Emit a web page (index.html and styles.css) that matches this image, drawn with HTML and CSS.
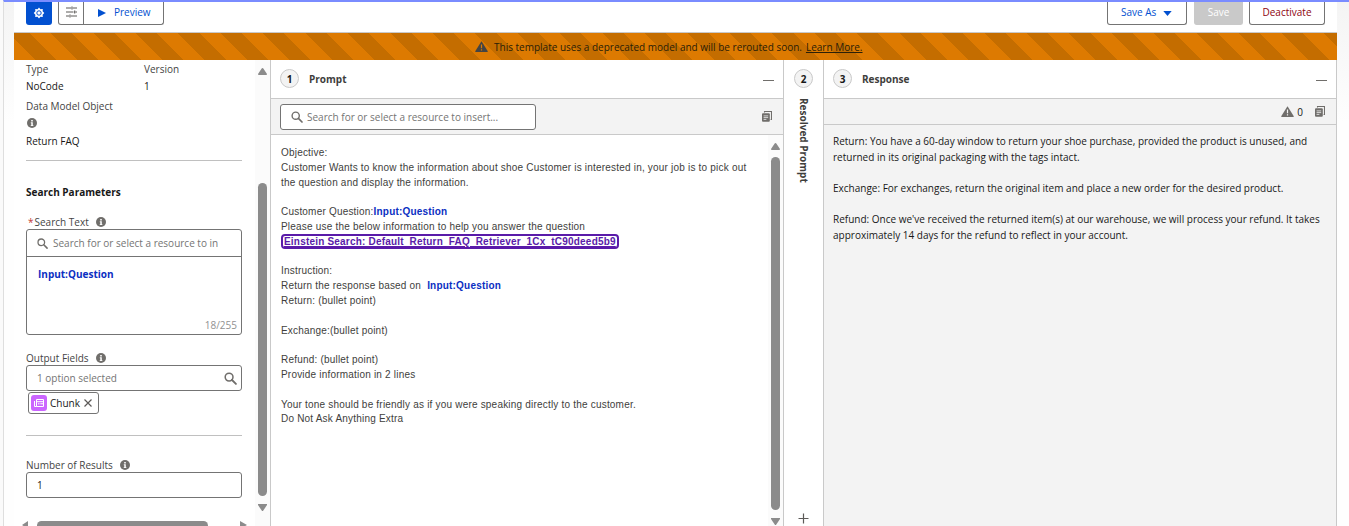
FILE: index.html
```
<!DOCTYPE html>
<html lang="en">
<head>
<meta charset="utf-8">
<title>Prompt Builder</title>
<link rel="stylesheet" href="styles.css">
</head>
<body>
<svg width="0" height="0" class="defs">
  <symbol id="info" viewBox="0 0 10 10"><circle cx="5" cy="5" r="5" fill="#706e6b"/><path d="M4.2 2h1.6v1.5H4.2zM3.8 4.3h2v2.9h.6v.9H3.7v-.9h.6V5.2h-.5z" fill="#fff"/></symbol>
  <symbol id="search" viewBox="0 0 12 12"><circle cx="4.7" cy="4.7" r="3.6" fill="none" stroke="#706e6b" stroke-width="1.4"/><path d="M7.4 7.4l3.6 3.6" stroke="#706e6b" stroke-width="1.7" stroke-linecap="round"/></symbol>
  <symbol id="copy" viewBox="0 0 10 11"><path d="M2.5 1.6V.5h7v8H8.6" fill="none" stroke="#706e6b" stroke-width="1.1"/><rect x="0" y="2.2" width="7.8" height="8.6" rx="1" fill="#706e6b"/><path d="M1.6 4.9h4.6M1.6 6.6h4.6M1.6 8.4h2.8" stroke="#f3f3f3" stroke-width=".8"/></symbol>
  <symbol id="warn" viewBox="0 0 13 11"><path d="M6.5 0.2L12.8 10.2q.2.8-.7.8H.9q-.9 0-.7-.8z" fill="currentColor"/><path d="M6.5 3.6v3.6M6.5 8.3v1.3" stroke="var(--mark)" stroke-width="1.2"/></symbol>
</svg>
<div class="window">
  <div class="app">
    <header class="toolbar">
      <div class="gear"><svg width="12" height="12" viewBox="0 0 12 12"><path d="M6 .6l1.4 1.7 2.4-.3-.2 2.3L11.3 6 9.6 7.7l.2 2.3-2.4-.3L6 11.4 4.6 9.7l-2.4.3.2-2.3L.7 6l1.7-1.7L2.2 2l2.4.3z" fill="#fff"/><circle cx="6" cy="6" r="2.2" fill="none" stroke="#0250d0" stroke-width="1"/></svg></div>
      <div class="group">
        <div class="sliders"><svg width="11" height="12" viewBox="0 0 11 12"><path d="M0 2h5M7 2h4M0 6h7.5M9.5 6H11M0 10h3M5 10h6M6 .5v3M8.7 4.5v3M4 8.5v3" stroke="#5c5a58" stroke-width="1.1"/></svg></div>
        <div class="preview"><svg width="8" height="8" viewBox="0 0 8 8"><path d="M0 0l8 4-8 4z" fill="#0250d0"/></svg><span>Preview</span></div>
      </div>
      <div class="spacer"></div>
      <div class="btn saveas"><span>Save As</span><svg width="9" height="5" viewBox="0 0 9 5"><path d="M.3 0h8.4L4.5 5z" fill="#0250d0"/></svg></div>
      <div class="btn save">Save</div>
      <div class="btn deact">Deactivate</div>
    </header>
    <div class="banner"><svg width="13" height="11"><use href="#warn"/></svg><span class="msg">This template uses a deprecated model and will be rerouted soon.</span><span class="more">Learn More.</span></div>
    <main class="panels">
      <aside class="side">
        <div class="form">
          <div class="pair">
            <div><p class="label">Type</p><p class="value">NoCode</p></div>
            <div><p class="label">Version</p><p class="value">1</p></div>
          </div>
          <p class="label dmo">Data Model Object</p>
          <svg class="dmo-info" width="10" height="10"><use href="#info"/></svg>
          <p class="value faq">Return FAQ</p>
          <hr class="rule">
          <h2 class="heading">Search Parameters</h2>
          <div class="field-label text-label"><span><b class="req">*</b>Search Text</span><svg width="10" height="10"><use href="#info"/></svg></div>
          <div class="editor">
            <div class="editor-search"><svg width="11" height="11"><use href="#search"/></svg><span>Search for or select a resource to in</span></div>
            <div class="editor-body"><b class="token">Input:Question</b><span class="count">18/255</span></div>
          </div>
          <div class="field-label out-label"><span>Output Fields</span><svg width="10" height="10"><use href="#info"/></svg></div>
          <div class="select"><span>1 option selected</span><svg width="13" height="13"><use href="#search"/></svg></div>
          <div class="pill"><i class="pill-icon"><svg width="10" height="8" viewBox="0 0 10 8"><path d="M2.5.5h7v7h-7zM2.5 2.7h7M4 4.8h1.5M6.3 4.8H9M.5 2v5.5h2" fill="none" stroke="#fff"/></svg></i><span>Chunk</span><svg width="8" height="8" viewBox="0 0 8 8"><path d="M.5.5l7 7M7.500.5l-7 7" stroke="#5c5a58" stroke-width="1.2"/></svg></div>
          <hr class="rule second">
          <div class="field-label num-label"><span>Number of Results</span><svg width="10" height="10"><use href="#info"/></svg></div>
          <div class="number">1</div>
          <div class="hscroll"><svg width="6" height="8" viewBox="0 0 6 8"><path d="M6 0v8L0 4z" fill="#8b8b8b"/></svg><i></i><svg width="7" height="8" viewBox="0 0 7 8"><path d="M0 0v8l7-4z" fill="#8b8b8b"/></svg></div>
        </div>
        <div class="vscroll"><svg width="9" height="7" viewBox="0 0 9 7"><path d="M4.500 0q.6 0 1 .7L9 6q0 1-.8 1H.8Q0 7 0 6L3.500.7q.4-.7 1-.7z" fill="#8b8b8b"/></svg><i></i><svg width="9" height="7" viewBox="0 0 9 7"><path d="M0 0h9v1L5.300 6.500q-.8 1-1.600 0L0 1z" fill="#8b8b8b"/></svg></div>
      </aside>
      <section class="prompt">
        <div class="panel-head"><span class="num">1</span><h3>Prompt</h3><i class="minus"></i></div>
        <div class="panel-tools"><div class="finder"><svg width="12" height="12"><use href="#search"/></svg><span>Search for or select a resource to insert...</span></div><svg class="copy" width="10" height="11"><use href="#copy"/></svg></div>
        <div class="prompt-main">
          <div class="prompt-text">
            <p>Objective:</p>
            <p>Customer Wants to know the information about shoe Customer is interested in, your job is to pick out<br>the question and display the information.</p>
            <br>
            <p>Customer Question:<b class="token">Input:Question</b></p>
            <p>Please use the below information to help you answer the question</p>
            <p><b class="chip">Einstein Search: Default_Return_FAQ_Retriever_1Cx_tC90deed5b9</b></p>
            <br>
            <p>Instruction:</p>
            <p>Return the response based on <b class="token gap">Input:Question</b></p>
            <p>Return: (bullet point)</p>
            <br>
            <p>Exchange:(bullet point)</p>
            <br>
            <p>Refund: (bullet point)</p>
            <p>Provide information in 2 lines</p>
            <br>
            <p>Your tone should be friendly as if you were speaking directly to the customer.</p>
            <p>Do Not Ask Anything Extra</p>
          </div>
          <div class="vscroll inner"><svg width="9" height="7" viewBox="0 0 9 7"><path d="M4.500 0q.6 0 1 .7L9 6q0 1-.8 1H.8Q0 7 0 6L3.500.7q.4-.7 1-.7z" fill="#8b8b8b"/></svg><i></i><svg width="9" height="7" viewBox="0 0 9 7"><path d="M0 0h9v1L5.300 6.500q-.8 1-1.600 0L0 1z" fill="#8b8b8b"/></svg></div>
        </div>
      </section>
      <section class="resolved"><span class="num">2</span><h3>Resolved Prompt</h3><svg class="plus" width="11" height="11" viewBox="0 0 11 11"><path d="M5.500 0.500v10M.5 5.500h10" stroke="#5c5a58" stroke-width="1.2"/></svg></section>
      <section class="response">
        <div class="panel-head"><span class="num">3</span><h3>Response</h3><i class="minus"></i></div>
        <div class="resp-tools"><svg class="w" width="13" height="11"><use href="#warn"/></svg><span>0</span><svg width="10" height="11"><use href="#copy"/></svg></div>
        <div class="resp-text">
          <p>Return: You have a 60-day window to return your shoe purchase, provided the product is unused, and<br>returned in its original packaging with the tags intact.</p>
          <br>
          <p>Exchange: For exchanges, return the original item and place a new order for the desired product.</p>
          <br>
          <p>Refund: Once we've received the returned item(s) at our warehouse, we will process your refund. It takes<br>approximately 14 days for the refund to reflect in your account.</p>
        </div>
      </section>
    </main>
  </div>
</div>
</body>
</html>
```
FILE: styles.css
```
* { box-sizing: border-box; }
body { margin: 0; height: 526px; overflow: hidden; background: #fafafa; font: 10px/14px "Open Sans", "Noto Sans", sans-serif; color: #181818; }
p, h2, h3 { margin: 0; }
svg { display: block; flex: none; }
.defs { position: absolute; }
.window { margin-left: 3px; height: 526px; border-left: 1px solid #dedede; border-top: 2px solid #7a8cff; padding: 0 12px 0 10px; background: linear-gradient(#f4f4f4, #fefefe 120px); }
.app { height: 524px; display: flex; flex-direction: column; background: #fff; }
.toolbar { height: 31px; flex: none; display: flex; align-items: flex-start; padding: 0 12px; border-bottom: 1px solid #c9c9c9; color: #0250d0; }
.gear { width: 26px; height: 23px; background: #0250d0; border-radius: 0 0 3px 3px; display: flex; justify-content: center; padding-top: 5px; }
.group { margin-left: 6px; width: 106px; height: 23px; display: flex; border: 1px solid #747474; border-top: 0; border-radius: 0 0 3px 3px; }
.sliders { width: 25px; border-right: 1px solid #747474; padding: 4px 0 0 7px; }
.preview { display: flex; padding-left: 14px; gap: 8px; line-height: 21px; }
.preview svg { margin-top: 7px; }
.spacer { flex: 1; }
.btn { height: 23px; border: 1px solid #747474; border-top: 0; border-radius: 0 0 3px 3px; line-height: 21px; text-align: center; }
.saveas { width: 80px; display: flex; gap: 7px; padding-left: 13px; }
.saveas svg { margin-top: 9px; }
.save { width: 49px; margin-left: 7px; background: #c9c9c9; border-color: #c9c9c9; color: #fff; }
.deact { width: 76px; margin-left: 6px; color: #8e030f; }
.banner { height: 27px; flex: none; display: flex; align-items: center; padding-left: 461px; color: #2a2008; background: repeating-linear-gradient(45deg, #dd7a01 0 15px, #c46d00 15px 30px); background-position: 0 0; }
.banner svg { color: #444; --mark: #dd7a01; }
.msg { margin-left: 6px; }
.more { margin-left: 4px; text-decoration: underline; }
.panels { flex: 1; min-height: 0; display: flex; border-right: 1px solid #c9c9c9; }
.side { width: 256px; flex: none; display: flex; overflow: hidden; }
.form { width: 241px; padding-left: 12px; display: flex; flex-direction: column; }
.form > * { flex: none; }
.pair { display: grid; grid-template-columns: 118px 1fr; margin-top: 2px; }
.label, .field-label { color: #444; }
.value { margin-top: 3px; color: #181818; }
.dmo { margin-top: 6px; }
.dmo-info { margin: 5px 0 0 1px; }
.faq { margin-top: 6px; }
.rule { width: 216px; height: 1px; border: 0; background: #c0c0c0; margin: 12px 0 0; }
.heading { font-size: 10px; font-weight: 700; line-height: 14px; margin-top: 24px; }
.field-label { display: flex; align-items: center; gap: 7px; height: 14px; }
.req { color: #c23934; font-weight: 400; margin-right: 1px; }
.text-label { margin-top: 16px; padding-left: 2px; }
.editor { width: 216px; height: 106px; border: 1px solid #747474; border-radius: 3px; }
.editor-search { height: 27px; border-bottom: 1px solid #747474; display: flex; align-items: center; gap: 5px; padding-left: 10px; color: #747474; }
.editor-body { height: 77px; display: flex; flex-direction: column; padding: 10px 4px 0 11px; }
.count { margin: 37px 0 0 auto; color: #919191; }
.token { color: #0b2fc2; }
.out-label { margin-top: 16px; }
.select, .number { width: 216px; height: 26px; border: 1px solid #747474; border-radius: 3px; display: flex; align-items: center; justify-content: space-between; padding: 0 4px 0 10px; color: #747474; }
.pill { width: 71px; height: 22px; margin: 1px 0 0 2px; border: 1px solid #747474; border-radius: 3px; display: flex; align-items: center; padding-left: 2px; }
.pill-icon { width: 16px; height: 16px; border-radius: 3px; background: #cb65ff; display: flex; align-items: center; justify-content: center; margin-right: 3px; }
.pill span { width: 34px; }
.second { margin-top: 21px; }
.num-label { margin-top: 22px; }
.number { color: #181818; }
.hscroll { display: flex; align-items: flex-start; margin: 23px 0 0 -4px; }
.hscroll i { width: 171px; height: 9px; border-radius: 5px; background: #8b8b8b; margin: 0 32px 0 9px; }
.vscroll { width: 15px; background: #fbfbfb; display: flex; flex-direction: column; align-items: center; padding: 8px 0 0 0; }
.vscroll i { width: 9px; height: 313px; border-radius: 5px; background: #8b8b8b; margin: 108px 0 8px; }
.prompt { width: 513px; border-left: 1px solid #c9c9c9; display: flex; flex-direction: column; }
.panel-head { height: 39px; flex: none; border-bottom: 1px solid #c9c9c9; display: flex; align-items: center; padding: 0 9px; background: #fff; }
.num { width: 19px; height: 19px; flex: none; border: 1px solid #c9c9c9; border-radius: 50%; background: #f3f3f3; font-weight: 700; line-height: 18px; text-align: center; }
.panel-head .num { margin-top: -2px; }
h3 { font-size: 10px; font-weight: 700; color: #3e3e3c; }
.panel-head h3 { margin-left: 10px; }
.minus { width: 11px; height: 1px; background: #706e6b; margin: 2px 0 0 auto; }
.panel-tools { height: 36px; flex: none; background: #f3f3f3; border-bottom: 1px solid #c9c9c9; display: flex; align-items: center; justify-content: space-between; padding: 0 11px 0 9px; }
.finder { width: 256px; height: 26px; border: 1px solid #747474; border-radius: 3px; background: #fff; display: flex; align-items: center; gap: 4px; padding-left: 10px; color: #747474; }
.prompt-main { flex: 1; display: flex; justify-content: space-between; min-height: 0; }
.prompt-text { padding: 11px 0 0 10px; font: 10px/14.800px "Liberation Sans", Arial, sans-serif; color: #3e3e3c; white-space: nowrap; letter-spacing: .2px; }
.chip { color: #5a1ba9; border: 2px solid #5a1ba9; border-radius: 4px; padding: 0 1px; text-decoration: underline; }
.gap { margin-left: 3px; }
.inner { width: 15px; }
.inner i { height: 353px; margin: 7px 0 8px; }
.inner svg { flex: none; }
.resolved { width: 40px; border-left: 1px solid #c9c9c9; display: flex; flex-direction: column; align-items: center; padding: 9px 0 2px; }
.resolved h3 { writing-mode: vertical-rl; margin-top: 10px; line-height: 14px; }
.plus { margin-top: auto; }
.response { flex: 1; border-left: 1px solid #c9c9c9; background: #f3f3f3; }
.resp-tools { height: 26px; border-bottom: 1px solid #c9c9c9; display: flex; align-items: center; justify-content: flex-end; padding-right: 11px; }
.w { color: #706e6b; --mark: #f3f3f3; }
.resp-tools span { margin: 0 12px 0 3px; }
.resp-text { padding: 9px 0 0 9px; line-height: 15.600px; white-space: nowrap; }
```
